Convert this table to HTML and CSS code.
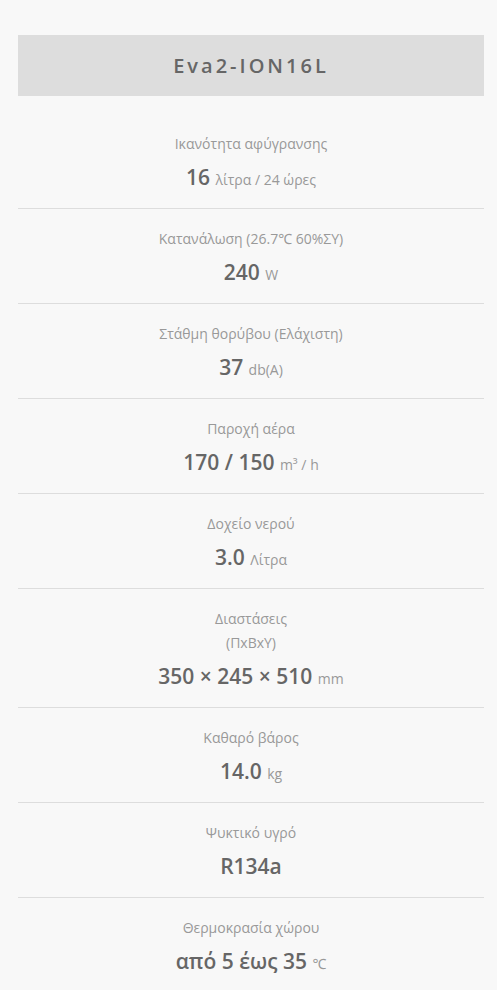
FILE: index.html
```html
<!DOCTYPE html>
<html lang="el">

<head>
    <meta charset="UTF-8">
    <meta name="viewport" content="width=device-width, initial-scale=1.0">
    <title>Eva2-ION16L</title>
    <link rel="stylesheet" href="styles.css">
</head>

<body>
    <div class="specs">
        <h2 class="specs-title">Eva2-ION16L</h2>

        <ul class="spec-list">
            <li class="spec">
                <div class="spec-label">Ικανότητα αφύγρανσης</div>
                <div class="spec-value">16 <span class="unit">λίτρα / 24 ώρες</span></div>
            </li>
            <li class="spec">
                <div class="spec-label">Κατανάλωση (26.7℃ 60%ΣΥ)</div>
                <div class="spec-value">240 <span class="unit">W</span></div>
            </li>
            <li class="spec">
                <div class="spec-label">Στάθμη θορύβου (Ελάχιστη)</div>
                <div class="spec-value">37 <span class="unit">db(A)</span></div>
            </li>
            <li class="spec">
                <div class="spec-label">Παροχή αέρα</div>
                <div class="spec-value">170 / 150 <span class="unit">m³ / h</span></div>
            </li>
            <li class="spec">
                <div class="spec-label">Δοχείο νερού</div>
                <div class="spec-value">3.0 <span class="unit">Λίτρα</span></div>
            </li>
            <li class="spec">
                <div class="spec-label">Διαστάσεις<br>(ΠxΒxΥ)</div>
                <div class="spec-value">350 × 245 × 510 <span class="unit">mm</span></div>
            </li>
            <li class="spec">
                <div class="spec-label">Καθαρό βάρος</div>
                <div class="spec-value">14.0 <span class="unit">kg</span></div>
            </li>
            <li class="spec">
                <div class="spec-label">Ψυκτικό υγρό</div>
                <div class="spec-value">R134a</div>
            </li>
            <li class="spec">
                <div class="spec-label">Θερμοκρασία χώρου</div>
                <div class="spec-value">από 5 έως 35 <span class="unit">℃</span></div>
            </li>
        </ul>
    </div>
</body>

</html>
```

FILE: styles.css
```css
body {
    margin: 0;
    background: #f8f8f8;
    font-family: "Open Sans", "Noto Sans", sans-serif;
    color: #666;
}

.specs {
    margin: 35px 13px 0 18px;
}

.specs-title {
    margin: 0;
    height: 61px;
    line-height: 61px;
    background: #dddddd;
    text-align: center;
    font-size: 20px;
    font-weight: 600;
    letter-spacing: 3px;
    color: #666;
}

.spec-list {
    list-style: none;
    margin: 0;
    padding: 18px 0 0;
}

.spec {
    padding: 18px 0 16px;
    border-bottom: 1px solid #dddddd;
    text-align: center;
}

.spec:last-child {
    border-bottom: none;
}

.spec-label {
    font-size: 14px;
    line-height: 24px;
    color: #999;
}

.spec-value {
    margin-top: 6px;
    font-size: 21px;
    line-height: 30px;
    font-weight: 600;
    color: #666;
}

.unit {
    font-size: 14px;
    line-height: 1;
    font-weight: 400;
    color: #999;
}
```
